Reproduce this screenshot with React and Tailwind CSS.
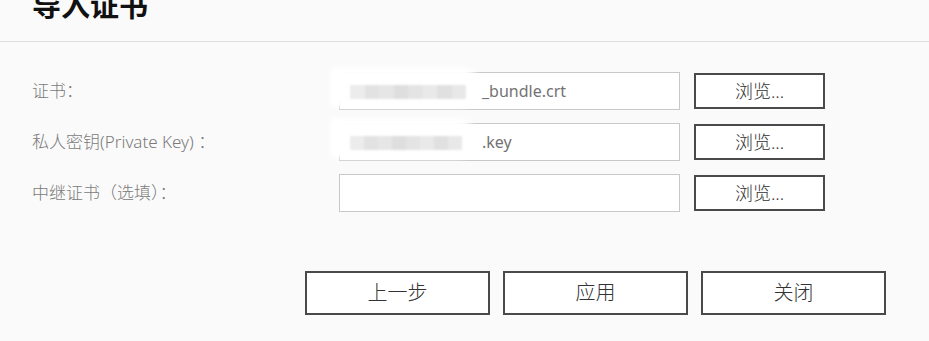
import React from 'react';

const font = { fontFamily: '"Noto Sans", "Noto Sans CJK SC", sans-serif' };

const Redact = ({ w }) => (
    <div className="absolute -left-[10px] -top-[6px] h-[40px] pointer-events-none" style={{ width: w }}>
        <div className="absolute inset-0 rounded-r-full bg-white blur-[3px]"></div>
        <div className="absolute left-[20px] right-[14px] top-[18px] h-[14px] flex blur-[1px]">
            <div className="flex-1 bg-[#ececec]"></div>
            <div className="flex-1 bg-[#e2e2e2]"></div>
            <div className="flex-1 bg-[#e6e6e6]"></div>
            <div className="flex-1 bg-[#dedede]"></div>
            <div className="flex-1 bg-[#e4e4e4]"></div>
            <div className="flex-1 bg-[#e9e9e9]"></div>
            <div className="flex-1 bg-[#e0e0e0]"></div>
            <div className="flex-1 bg-[#e8e8e8]"></div>
        </div>
    </div>
);

const rows = [
    { label: '证书：', value: '_bundle.crt', redact: 150 },
    { label: '私人密钥(Private Key) ：', value: '.key', redact: 146 },
    { label: '中继证书（选填）：', value: '', redact: 0 },
];

const App = () => {
    return (
        <div className="w-[929px] h-[341px] bg-[#fafafa] overflow-hidden" style={font}>
            {/* Header */}
            <div className="h-[42px] border-b border-[#dedede] px-8 overflow-hidden">
                <h1 className="text-[29px] leading-none font-bold text-[#111] -mt-[9px]">导入证书</h1>
            </div>

            {/* Form */}
            <div className="px-8 pt-[30px] flex flex-col gap-[13px]">
                {rows.map((row, i) => (
                    <div key={i} className="flex items-center h-[38px]">
                        <div className="w-[307px] text-[17px] font-light text-[#7a7a7a]">{row.label}</div>
                        <div className="relative w-[341px] h-[38px] bg-white border border-[#c8c8c8] flex items-center">
                            {row.redact > 0 && <Redact w={row.redact} />}
                            <span className="pl-[142px] text-[16px] text-[#737373]">{row.value}</span>
                        </div>
                        <button className="ml-[14px] w-[131px] h-[36px] bg-white border-2 border-[#4a4a4a] text-[18px] font-light text-[#333] flex items-center justify-center">
                            浏览...
                        </button>
                    </div>
                ))}
            </div>

            {/* Footer */}
            <div className="flex gap-[13px] pl-[305px] pt-[59px]">
                {['上一步', '应用', '关闭'].map((t) => (
                    <button key={t} className="w-[185px] h-[44px] bg-white border-2 border-[#4a4a4a] text-[20px] font-light text-[#333] flex items-center justify-center">
                        {t}
                    </button>
                ))}
            </div>
        </div>
    );
};

export default App;
